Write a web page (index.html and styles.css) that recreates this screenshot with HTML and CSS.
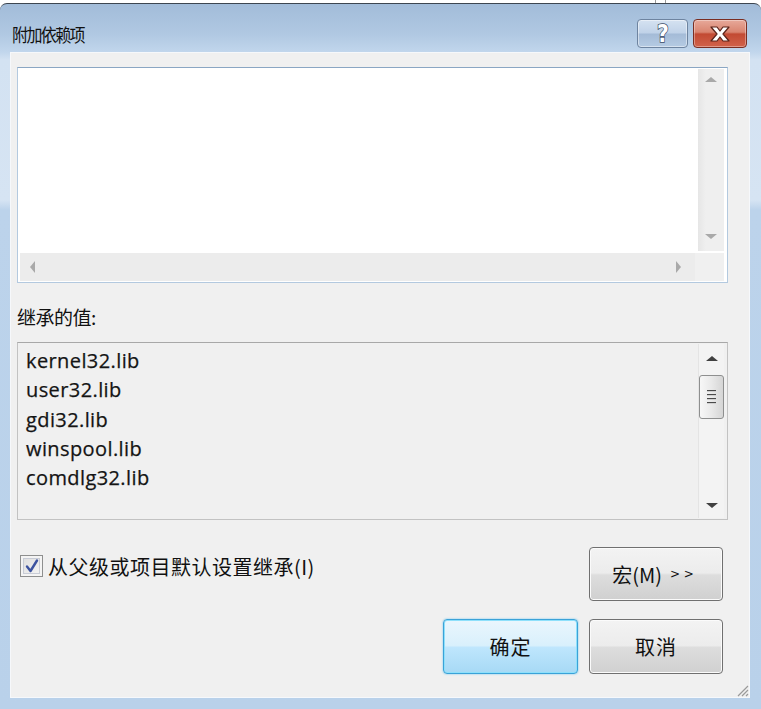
FILE: index.html
```html
<!DOCTYPE html>
<html lang="zh-CN">
<head>
<meta charset="utf-8">
<title>附加依赖项</title>
<link rel="stylesheet" href="styles.css">
</head>
<body>
<div class="topstrip"><span class="bgline l1"></span><span class="bgline l2"></span></div>
<div class="window">
  <div class="titlebar">
    <div class="title">附加依赖项</div>
    <div class="capbtns">
      <div class="capbtn help"><span class="qmark">?</span></div>
      <div class="capbtn close">
        <svg width="24" height="18" viewBox="0 0 24 18">
          <path d="M3 2 L9 2 L12 6 L15 2 L21 2 L15 9 L21 16 L15 16 L12 12 L9 16 L3 16 L9 9 Z" fill="#fff" stroke="#5a2218" stroke-width="1.2" stroke-linejoin="round"/>
        </svg>
      </div>
    </div>
  </div>
  <div class="content">
    <div class="editbox">
      <div class="editarea"></div>
      <div class="vscroll">
        <span class="arrow up"></span>
        <span class="arrow down"></span>
      </div>
      <div class="hscroll">
        <span class="arrow left"></span>
        <span class="arrow right"></span>
      </div>
      <div class="corner"></div>
    </div>

    <div class="label">继承的值:</div>

    <div class="listbox">
      <ul class="items">
        <li>kernel32.lib</li>
        <li>user32.lib</li>
        <li>gdi32.lib</li>
        <li>winspool.lib</li>
        <li>comdlg32.lib</li>
      </ul>
      <div class="vscroll2">
        <span class="arrow up dark"></span>
        <div class="thumb"><span></span><span></span><span></span><span></span></div>
        <span class="spacer"></span>
        <span class="arrow down dark"></span>
      </div>
    </div>

    <div class="bottom">
      <label class="check">
        <span class="box">
          <svg width="16" height="16" viewBox="0 0 16 16"><path d="M3 8.5 L6.5 13 L13 2.5" fill="none" stroke="#3c53a0" stroke-width="2.4" stroke-linecap="round" stroke-linejoin="round"/></svg>
        </span>
        <span class="checktext">从父级或项目默认设置继承(I)</span>
      </label>
      <div class="buttons">
        <div class="btn macro">宏(M) <span class="gt">&gt; &gt;</span></div>
        <div class="btn default">确定</div>
        <div class="btn">取消</div>
      </div>
    </div>

    <div class="grip">
      <svg width="14" height="14" viewBox="0 0 14 14">
        <path d="M13 3 L3 13 M13 7 L7 13 M13 11 L11 13" stroke="#9a9a9a" stroke-width="1.2"/>
      </svg>
    </div>
  </div>
</div>
</body>
</html>
```

FILE: styles.css
```css
* { box-sizing: border-box; }
html, body { margin: 0; padding: 0; }
body {
  width: 761px;
  height: 709px;
  overflow: hidden;
  background: #ffffff;
  font-family: "Noto Sans CJK SC", "Noto Sans", sans-serif;
  color: #000;
}
.topstrip {
  height: 3px;
  position: relative;
  background: #fff;
}
.bgline { position: absolute; top: 0; width: 1px; height: 3px; background: #9a9a9a; }
.l1 { left: 655px; }
.l2 { left: 665px; }

.window {
  height: 706px;
  border-top: 1px solid #3d4650;
  border-radius: 7px 7px 0 0;
  padding: 0 11px 11px 10px;
  display: flex;
  flex-direction: column;
  background:
    linear-gradient(to bottom,
      #a2bcd9 0px, #b0c8e2 30px, #c1d6ec 48px,
      #d3e2f2 56px, #d6e4f3 196px, #bcd3eb 206px, #b9d1ea 100%);
}
.titlebar {
  height: 48px;
  padding-top: 11px;
  display: flex;
  align-items: center;
  justify-content: space-between;
}
.title {
  font-size: 16px;
  padding-left: 2px;
  color: #111;
  letter-spacing: -1.6px;
  transform: scaleY(1.12);
}
.capbtns {
  display: flex;
  gap: 5px;
  margin-right: 3px;
}
.capbtn {
  height: 29px;
  border-radius: 4px;
  display: flex;
  align-items: center;
  justify-content: center;
}
.help {
  width: 51px;
  border: 1px solid #6e84a0;
  background: linear-gradient(to bottom, #d5e2f1 0%, #c0d2e8 48%, #a4bbd7 52%, #b5cbe3 100%);
  box-shadow: inset 0 0 0 1px rgba(255,255,255,0.45);
}
.qmark {
  font-family: "DejaVu Sans", sans-serif;
  font-weight: bold;
  font-size: 24px;
  color: #fff;
  -webkit-text-stroke: 1.5px #3c4c66;
  paint-order: stroke fill;
  line-height: 1;
  transform: scaleX(0.85);
}
.close {
  width: 54px;
  border: 1px solid #7a2e22;
  background: linear-gradient(to bottom, #e7a99a 0%, #d98470 45%, #c24a33 52%, #d1624a 100%);
  box-shadow: inset 0 0 0 1px rgba(255,255,255,0.35);
}

.content {
  flex: 1;
  position: relative;
  background: #f0f0f0;
  padding: 15px 22px 0 7px;
  box-shadow: inset 0 0 0 1px #f6f8fb;
}

/* multi-line edit box */
.editbox {
  height: 216px;
  border: 1px solid #b3c9df;
  border-top-color: #8aa6c3;
  background: #fff;
  padding: 1px 3px 1px 2px;
  display: grid;
  grid-template-columns: 1fr 26px;
  grid-template-rows: 1fr 28px;
  row-gap: 2px;
}
.editarea { background: #fff; }
.vscroll {
  background: linear-gradient(to right, #e6e6e6, #efefef 30%, #efefef);
  display: flex;
  flex-direction: column;
  justify-content: space-between;
  align-items: center;
  padding: 8px 0 12px;
}
.hscroll {
  background: #ececec;
  margin-right: 3px;
  display: flex;
  justify-content: space-between;
  align-items: center;
  padding: 0 14px 0 10px;
}
.corner { background: #f0f0f0; margin-left: -3px; }

.arrow { width: 0; height: 0; display: block; }
.arrow.up { border-left: 6px solid transparent; border-right: 6px solid transparent; border-bottom: 5px solid #a9a9a9; }
.arrow.down { border-left: 6px solid transparent; border-right: 6px solid transparent; border-top: 5px solid #a9a9a9; }
.arrow.left { border-top: 6px solid transparent; border-bottom: 6px solid transparent; border-right: 5px solid #a9a9a9; }
.arrow.right { border-top: 6px solid transparent; border-bottom: 6px solid transparent; border-left: 5px solid #a9a9a9; }
.arrow.dark.up { border-bottom-color: #404040; }
.arrow.dark.down { border-top-color: #404040; }

.label {
  font-size: 19px;
  line-height: 24px;
  margin: 22px 0 13px;
  letter-spacing: -0.5px;
  color: #111;
}

/* read-only list */
.listbox {
  height: 178px;
  border: 1px solid #c2c2c2;
  border-top-color: #a8a8a8;
  background: #f0f0f0;
  padding: 1px 3px 1px 1px;
  display: flex;
  justify-content: space-between;
}
.items {
  list-style: none;
  margin: 0;
  padding: 2px 0 0 7px;
  font-family: "Open Sans", "Noto Sans", sans-serif;
  font-size: 20px;
  letter-spacing: 0.4px;
  line-height: 29.3px;
  color: #141414;
  -webkit-text-stroke: 0.25px #141414;
}
.vscroll2 {
  width: 26px;
  background: #f3f3f3;
  border-left: 1px solid #e4e4e4;
  display: flex;
  flex-direction: column;
  align-items: center;
  padding: 12px 0 10px;
}
.vscroll2 .arrow.up { margin-bottom: 14px; }
.thumb {
  width: 25px;
  height: 44px;
  margin-left: -1px;
  border: 1px solid #8e8f8f;
  border-radius: 3px;
  background: linear-gradient(to right, #f7f7f7, #e9e9e9 50%, #d5d5d5);
  display: flex;
  flex-direction: column;
  align-items: center;
  justify-content: center;
  gap: 2px;
}
.thumb span {
  width: 9px;
  height: 2px;
  background: #4a4a4a;
  border-bottom: 1px solid #cfcfcf;
}
.spacer { flex: 1; }

/* bottom controls */
.bottom {
  display: flex;
  justify-content: space-between;
  margin: 27px 5px 0 0;
}
.check {
  display: flex;
  align-items: center;
  gap: 5px;
  margin: 8px 0 0 3px;
  height: 22px;
}
.box {
  width: 23px;
  height: 22px;
  border: 1px solid #8e8f8f;
  background: linear-gradient(to bottom right, #dcdcdc, #f6f6f6);
  box-shadow: inset 0 0 0 2px #f4f4f4, inset 0 0 0 3px #c8ccd6;
  display: flex;
  align-items: center;
  justify-content: center;
}
.checktext {
  font-size: 20px;
  letter-spacing: 0.5px;
  color: #111;
}
.buttons {
  display: grid;
  grid-template-columns: 135px 134px;
  grid-template-rows: 54px 55px;
  column-gap: 11px;
  row-gap: 18px;
}
.btn {
  border: 1px solid #707070;
  border-radius: 4px;
  background: linear-gradient(to bottom, #f3f3f3 0%, #ececec 48%, #dddddd 52%, #d0d0d0 100%);
  box-shadow: inset 0 0 0 1px #fbfbfb;
  display: flex;
  align-items: center;
  justify-content: center;
  font-size: 20px;
  letter-spacing: 1px;
  color: #111;
}
.macro {
  grid-column: 2;
  letter-spacing: 0;
  padding-right: 6px;
}
.gt {
  font-family: "DejaVu Sans", sans-serif;
  font-size: 12px;
  margin-left: 8px;
  letter-spacing: 0;
}
.default {
  border-color: #3aa2d8;
  background: linear-gradient(to bottom, #eaf6fd 0%, #d9f0fc 48%, #bee6fd 52%, #a7d9f5 100%);
  box-shadow: inset 0 0 0 1px #8ee0fb, 0 0 2px #5fc2ee;
}
.grip {
  position: absolute;
  right: 1px;
  bottom: 1px;
  line-height: 0;
}
```
